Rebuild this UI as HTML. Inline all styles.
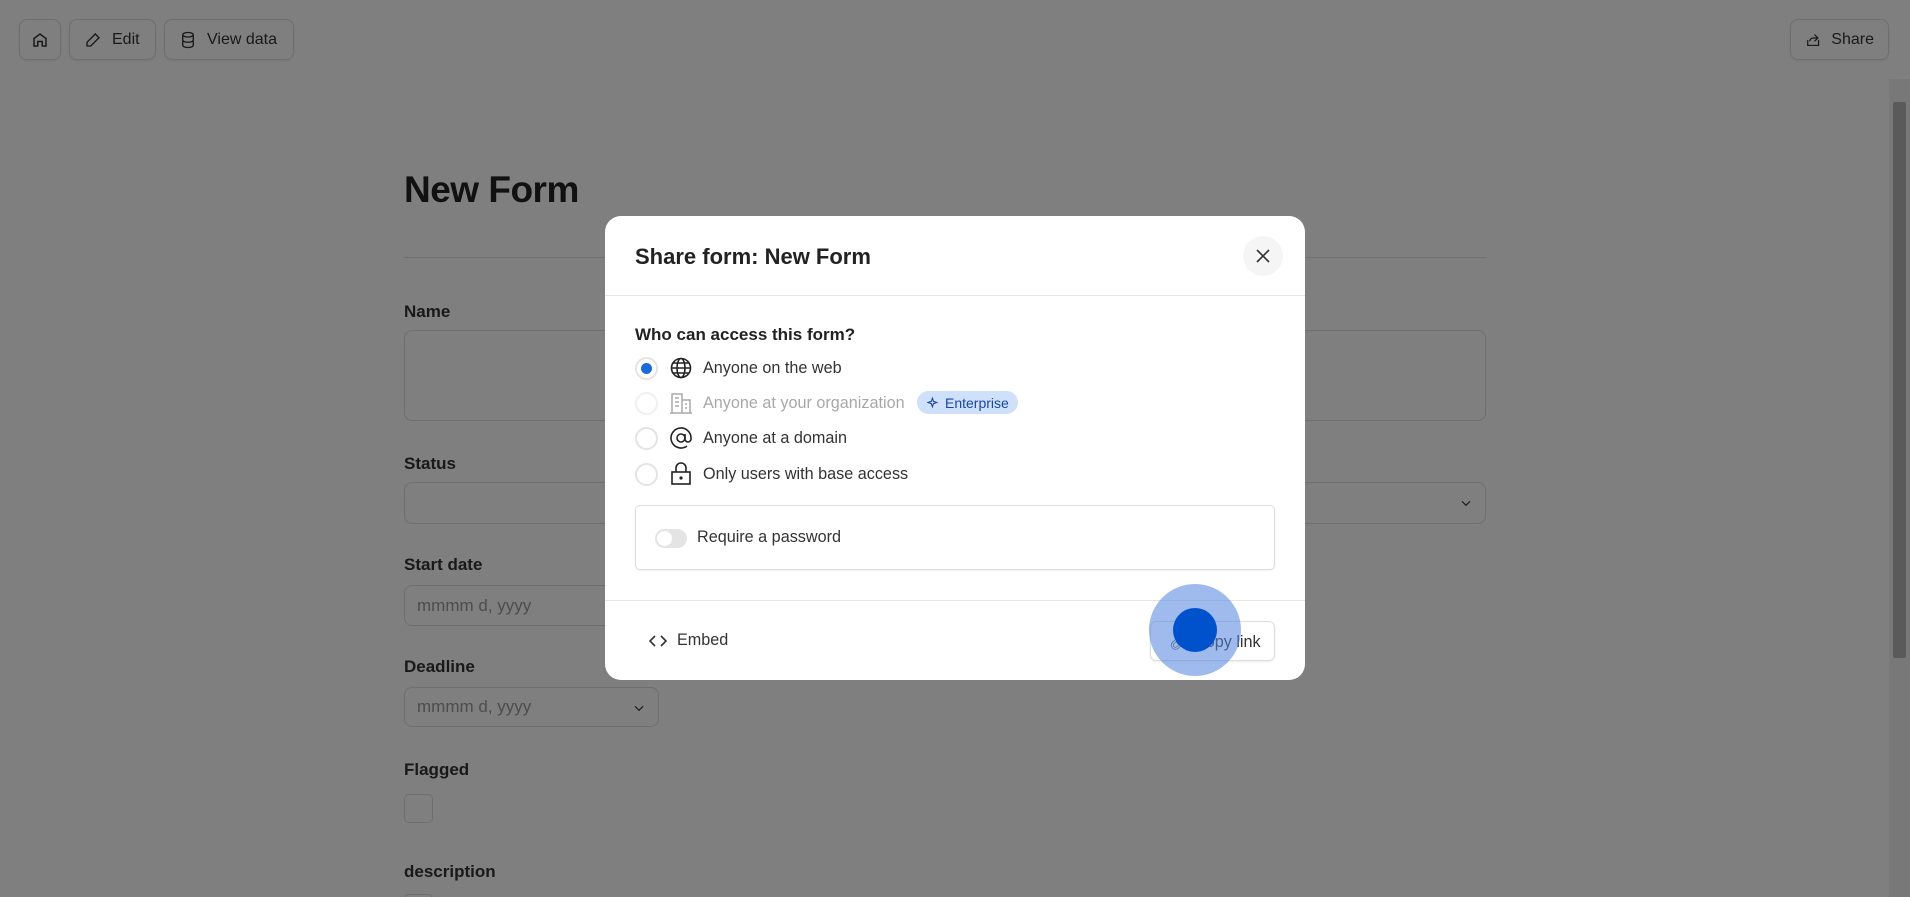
<!DOCTYPE html>
<html style="width:1910px;height:897px;overflow:hidden"><head><meta charset="utf-8"><style>
*{box-sizing:border-box;margin:0;padding:0}
body{width:1910px;height:897px;overflow:hidden;background:#fff;font-family:"Liberation Sans",sans-serif;color:#1d1f25}
#wrap{position:relative;width:1910px;height:897px;overflow:hidden}
.abs{position:absolute}
.btn{position:absolute;top:19px;height:41px;border:1px solid #ddd;border-radius:8px;display:flex;align-items:center;gap:10px;padding:0 14px;font-size:16px;color:#333;box-shadow:0 1px 2px rgba(0,0,0,.08)}
.lbl{position:absolute;left:404px;font-size:17px;font-weight:bold;color:#333}
.inp{position:absolute;left:404px;border:1px solid #ddd;border-radius:8px;background:#fff}
.ph{font-size:17px;color:#999;position:absolute;left:12px;top:50%;transform:translateY(-50%)}
.ov{position:absolute;left:0;top:0;width:1910px;height:897px;background:rgba(0,0,0,.5)}
.modal{position:absolute;left:605px;top:216px;width:700px;height:464px;background:#fff;border-radius:16px;overflow:hidden}
.row{position:absolute;left:0;height:30px;display:flex;align-items:center}
.radio{width:23px;height:23px;border:2px solid #e4e4e4;border-radius:50%;margin-left:30px;position:relative}
.rt{font-size:16.2px;color:#333;position:absolute;left:98px;white-space:nowrap}
.ic{position:absolute;left:64px;top:3px}
</style></head><body><div id="wrap">
<div class="btn" style="left:19px;width:42px;padding:0 11px"><svg width="18" height="18" viewBox="0 0 24 24" fill="none" stroke="#333" stroke-width="2"><path d="M4 10l8-6 8 6v10h-5v-6h-6v6H4z"/></svg></div>
<div class="btn" style="left:69px;width:87px"><svg width="18" height="18" viewBox="0 0 24 24" fill="none" stroke="#333" stroke-width="1.8"><path d="M15 4l5 5L9 20H4v-5z"/></svg>Edit</div>
<div class="btn" style="left:164px;width:130px"><svg width="18" height="18" viewBox="0 0 24 24" fill="none" stroke="#333" stroke-width="1.8"><ellipse cx="12" cy="5" rx="7" ry="3"/><path d="M5 5v14c0 1.7 3 3 7 3s7-1.3 7-3V5M5 12c0 1.7 3 3 7 3s7-1.3 7-3"/></svg>View data</div>
<div class="btn" style="left:1790px;width:99px"><svg width="18" height="18" viewBox="0 0 24 24" fill="none" stroke="#333" stroke-width="1.8"><path d="M4 12v8h16v-8M14 4l5 5-5 5M19 9h-7a5 5 0 00-5 5"/></svg>Share</div>
<div class="abs" style="left:1889px;top:79px;width:21px;height:818px;background:#f0f0f0"></div>
<div class="abs" style="left:1893px;top:102px;width:13px;height:556px;background:#b5b5b5;border-radius:2px"></div>
<div class="abs" style="left:404px;top:169px;font-size:37px;font-weight:bold;color:#222;letter-spacing:-0.5px">New Form</div>
<div class="abs" style="left:404px;top:257px;width:1082px;height:1px;background:#e3e3e3"></div>
<div class="lbl" style="top:302px">Name</div>
<div class="inp" style="top:330px;width:1082px;height:91px"></div>
<div class="lbl" style="top:454px">Status</div>
<div class="inp" style="top:482px;width:1082px;height:42px"><svg class="abs" style="right:12px;top:13px" width="14" height="14" viewBox="0 0 24 24" fill="none" stroke="#333" stroke-width="2"><path d="M5 9l7 7 7-7"/></svg></div>
<div class="lbl" style="top:555px">Start date</div>
<div class="inp" style="top:585px;width:255px;height:41px"><span class="ph">mmmm d, yyyy</span></div>
<div class="lbl" style="top:657px">Deadline</div>
<div class="inp" style="top:687px;width:255px;height:40px"><span class="ph">mmmm d, yyyy</span><svg class="abs" style="right:12px;top:13px" width="14" height="14" viewBox="0 0 24 24" fill="none" stroke="#333" stroke-width="2"><path d="M5 9l7 7 7-7"/></svg></div>
<div class="lbl" style="top:760px">Flagged</div>
<div class="inp" style="top:794px;width:29px;height:29px;border-radius:5px"></div>
<div class="lbl" style="top:862px">description</div>
<div class="inp" style="top:894px;width:29px;height:29px;border-radius:5px"></div>
<div class="ov"></div>
<div class="modal">
 <div class="abs" style="left:30px;top:28px;font-size:22px;font-weight:bold;color:#222">Share form: New Form</div>
 <div class="abs" style="left:638px;top:20px;width:40px;height:40px;border-radius:50%;background:#f5f5f5;display:flex;align-items:center;justify-content:center"><svg width="16" height="16" viewBox="0 0 16 16" stroke="#333" stroke-width="1.6"><path d="M2 2l12 12M14 2L2 14"/></svg></div>
 <div class="abs" style="left:0;top:79px;width:700px;height:1px;background:#e5e5e5"></div>
 <div class="abs" style="left:30px;top:109px;font-size:17px;font-weight:bold;color:#222">Who can access this form?</div>
 <div class="row" style="top:137px"><div class="radio"><div class="abs" style="left:4px;top:4px;width:11px;height:11px;border-radius:50%;background:#1a6ad9"></div></div>
  <svg class="ic" width="24" height="24" viewBox="0 0 24 24" fill="none" stroke="#222" stroke-width="1.6"><circle cx="12" cy="12" r="9.5"/><ellipse cx="12" cy="12" rx="4" ry="9.5"/><path d="M2.5 12h19M4 7h16M4 17h16"/></svg><span class="rt">Anyone on the web</span></div>
 <div class="row" style="top:172px"><div class="radio" style="border-color:#f0f0f0"></div>
  <svg class="ic" width="24" height="24" viewBox="0 0 24 24" fill="none" stroke="#aaa" stroke-width="1.5"><path d="M3 22V3h10v19M13 9h8v13M1 22h22M6 7h4M6 11h4M6 15h4M16 13h2M16 17h2"/></svg><span class="rt" style="color:#a8a8a8">Anyone at your organization</span>
  <div class="abs" style="left:312px;top:3px;width:101px;height:23px;border-radius:12px;background:#cfe0fa;color:#1847a6;font-size:14px;display:flex;align-items:center;gap:5px;padding-left:10px"><svg width="13" height="13" viewBox="0 0 24 24" fill="none" stroke="#1847a6" stroke-width="2"><path d="M10 4l2 6 6 2-6 2-2 6-2-6-6-2 6-2z"/></svg>Enterprise</div></div>
 <div class="row" style="top:207px"><div class="radio"></div>
  <svg class="ic" width="24" height="24" viewBox="0 0 24 24" fill="none" stroke="#222" stroke-width="1.6"><circle cx="12" cy="12" r="4"/><path d="M16 8v5a3 3 0 006 0v-1a10 10 0 10-4 8"/></svg><span class="rt">Anyone at a domain</span></div>
 <div class="row" style="top:243px"><div class="radio"></div>
  <svg class="ic" width="24" height="24" viewBox="0 0 24 24" fill="none" stroke="#222" stroke-width="1.6"><rect x="3" y="10" width="18" height="12"/><path d="M7 10V6a5 5 0 0110 0v4"/><circle cx="12" cy="16" r="0.8" fill="#222"/></svg><span class="rt">Only users with base access</span></div>
 <div class="abs" style="left:30px;top:289px;width:640px;height:65px;border:1px solid #ddd;border-radius:5px;box-shadow:0 1px 2px rgba(0,0,0,.06)">
  <div class="abs" style="left:19px;top:23px;width:32px;height:19px;border-radius:10px;background:#e4e4e4"><div class="abs" style="left:2px;top:2px;width:15px;height:15px;border-radius:50%;background:#fff"></div></div>
  <div class="abs" style="left:61px;top:22px;font-size:16.2px;color:#333">Require a password</div>
 </div>
 <div class="abs" style="left:0;top:384px;width:700px;height:1px;background:#e5e5e5"></div>
 <div class="abs" style="left:44px;top:415px;font-size:16.2px;color:#333;display:flex;align-items:center;gap:10px"><svg width="18" height="14" viewBox="0 0 18 14" fill="none" stroke="#333" stroke-width="1.6"><path d="M6 2L1 7l5 5M12 2l5 5-5 5"/></svg>Embed</div>
 <div class="abs" style="left:545px;top:405px;width:125px;height:40px;border:1px solid #ddd;border-radius:6px;font-size:16.2px;color:#333;padding:10px 0 0 18px;box-shadow:0 1px 2px rgba(0,0,0,.08)">&#x1F517;&#xFE0E; Copy link</div>
 <div class="abs" style="left:544px;top:368px;width:92px;height:92px;border-radius:50%;background:rgba(80,130,220,.55)"></div>
 <div class="abs" style="left:568px;top:392px;width:44px;height:44px;border-radius:50%;background:#0052cc"></div>
</div>
</div></body></html>
